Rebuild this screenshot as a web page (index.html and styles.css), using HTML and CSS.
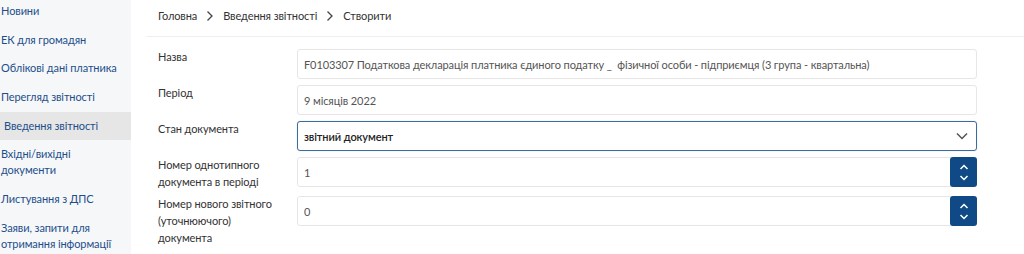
FILE: index.html
```html
<!DOCTYPE html>
<html lang="uk">
<head>
  <meta charset="UTF-8" />
  <meta name="viewport" content="width=device-width, initial-scale=1.0"/>
  <title>Введення звітності</title>
  <link rel="stylesheet" href="styles.css">
</head>
<body>
  <div class="layout">
    <aside class="sidebar">
      <ul class="menu">
        <li><a href="#">Новини</a></li>
        <li><a href="#">ЕК для громадян</a></li>
        <li><a href="#">Облікові дані платника</a></li>
        <li><a href="#">Перегляд звітності</a></li>
        <li class="active"><a href="#">Введення звітності</a></li>
        <li><a href="#">Вхідні/вихідні документи</a></li>
        <li><a href="#">Листування з ДПС</a></li>
        <li><a href="#">Заяви, запити для отримання інформації</a></li>
      </ul>
    </aside>

    <main class="content">
      <nav class="breadcrumbs">
        <a href="#">Головна</a>
        <svg class="crumb-sep" viewBox="0 0 8 12" width="8" height="12"><path d="M1.5 1.5 L6 6 L1.5 10.5" /></svg>
        <a href="#">Введення звітності</a>
        <svg class="crumb-sep" viewBox="0 0 8 12" width="8" height="12"><path d="M1.5 1.5 L6 6 L1.5 10.5" /></svg>
        <span>Створити</span>
      </nav>

      <form class="report-form">
        <div class="form-row">
          <label for="name">Назва</label>
          <input type="text" id="name" readonly value="F0103307 Податкова декларація платника єдиного податку _  фізичної особи - підприємця (3 група - квартальна)" />
        </div>

        <div class="form-row">
          <label for="period">Період</label>
          <input type="text" id="period" readonly value="9 місяців 2022" />
        </div>

        <div class="form-row">
          <label for="state">Стан документа</label>
          <div class="select-field">
            <span class="select-value">звітний документ</span>
            <svg class="select-arrow" viewBox="0 0 12 8" width="12" height="8"><path d="M1 1.5 L6 6.5 L11 1.5" /></svg>
          </div>
        </div>

        <div class="form-row">
          <label for="num">Номер однотипного документа в періоді</label>
          <div class="number-field">
            <input type="text" id="num" value="1" />
            <div class="spinner">
              <svg viewBox="0 0 10 6" width="10" height="6"><path d="M1.5 5 L5 1.5 L8.5 5" /></svg>
              <svg viewBox="0 0 10 6" width="10" height="6"><path d="M1.5 1 L5 4.5 L8.5 1" /></svg>
            </div>
          </div>
        </div>

        <div class="form-row">
          <label for="newnum">Номер нового звітного (уточнюючого) документа</label>
          <div class="number-field">
            <input type="text" id="newnum" value="0" />
            <div class="spinner">
              <svg viewBox="0 0 10 6" width="10" height="6"><path d="M1.5 5 L5 1.5 L8.5 5" /></svg>
              <svg viewBox="0 0 10 6" width="10" height="6"><path d="M1.5 1 L5 4.5 L8.5 1" /></svg>
            </div>
          </div>
        </div>
      </form>
    </main>
  </div>
</body>
</html>
```

FILE: styles.css
```css
body {
  font-family: 'Lato', 'Open Sans', sans-serif;
  background: #fff;
  margin: 0;
  padding: 0;
  font-size: 11px;
  letter-spacing: -0.1px;
  color: #333;
}
.layout {
  display: flex;
  height: 254px;
  overflow: hidden;
}
.sidebar {
  width: 131px;
  flex-shrink: 0;
  background: #f6f7f9;
  overflow: hidden;
}
.menu {
  list-style: none;
  margin: -3px 0 0;
  padding: 0;
}
.menu li a {
  display: block;
  padding: 6px 4px 6.7px 1px;
  line-height: 16px;
  color: #1d4f8a;
  text-decoration: none;
}
.menu li.active a {
  background: #e6e6e6;
  padding-left: 4px;
}
.content {
  flex: 1;
  min-width: 0;
}
.breadcrumbs {
  display: flex;
  align-items: center;
  gap: 9px;
  height: 37px;
  box-sizing: border-box;
  padding: 0 0 5px 11px;
  margin-left: 16px;
  border-bottom: 1px solid #eeeeee;
}
.breadcrumbs a, .breadcrumbs span {
  color: #333;
  text-decoration: none;
}
.crumb-sep path {
  fill: none;
  stroke: #444;
  stroke-width: 1.3;
}
.report-form {
  padding: 12px 47px 0 27px;
  display: flex;
  flex-direction: column;
  gap: 6px;
}
.form-row {
  display: flex;
  align-items: flex-start;
}
.form-row label {
  width: 139px;
  flex-shrink: 0;
  line-height: 17px;
  margin-top: -1px;
  padding-right: 10px;
  box-sizing: border-box;
  color: #333;
}
.form-row input {
  flex: 1;
  height: 30px;
  box-sizing: border-box;
  padding: 0 6px;
  border: 1px solid #e6e6e6;
  border-radius: 3px;
  font-family: inherit;
  font-size: 11px;
  letter-spacing: -0.1px;
  color: #555;
  outline: none;
}
.select-field {
  flex: 1;
  height: 30px;
  box-sizing: border-box;
  display: flex;
  align-items: center;
  justify-content: space-between;
  padding: 0 8px 0 6px;
  border: 1px solid #3e6aa1;
  border-radius: 3px;
  box-shadow: 0 0 1px rgba(30, 80, 140, 0.4);
}
.select-value {
  font-weight: 600;
  color: #222;
}
.select-arrow path {
  fill: none;
  stroke: #555;
  stroke-width: 1.5;
}
.number-field {
  flex: 1;
  display: flex;
  height: 30px;
  box-sizing: border-box;
  border: 1px solid #e6e6e6;
  border-radius: 3px;
}
.number-field input {
  border: none;
  height: 28px;
  border-radius: 3px 0 0 3px;
}
.spinner {
  width: 27px;
  margin: -1px -1px -1px 0;
  background: #0f4a86;
  border-radius: 3px;
  display: flex;
  flex-direction: column;
  align-items: center;
  justify-content: center;
  gap: 5px;
}
.spinner path {
  fill: none;
  stroke: #fff;
  stroke-width: 1.5;
}
```
